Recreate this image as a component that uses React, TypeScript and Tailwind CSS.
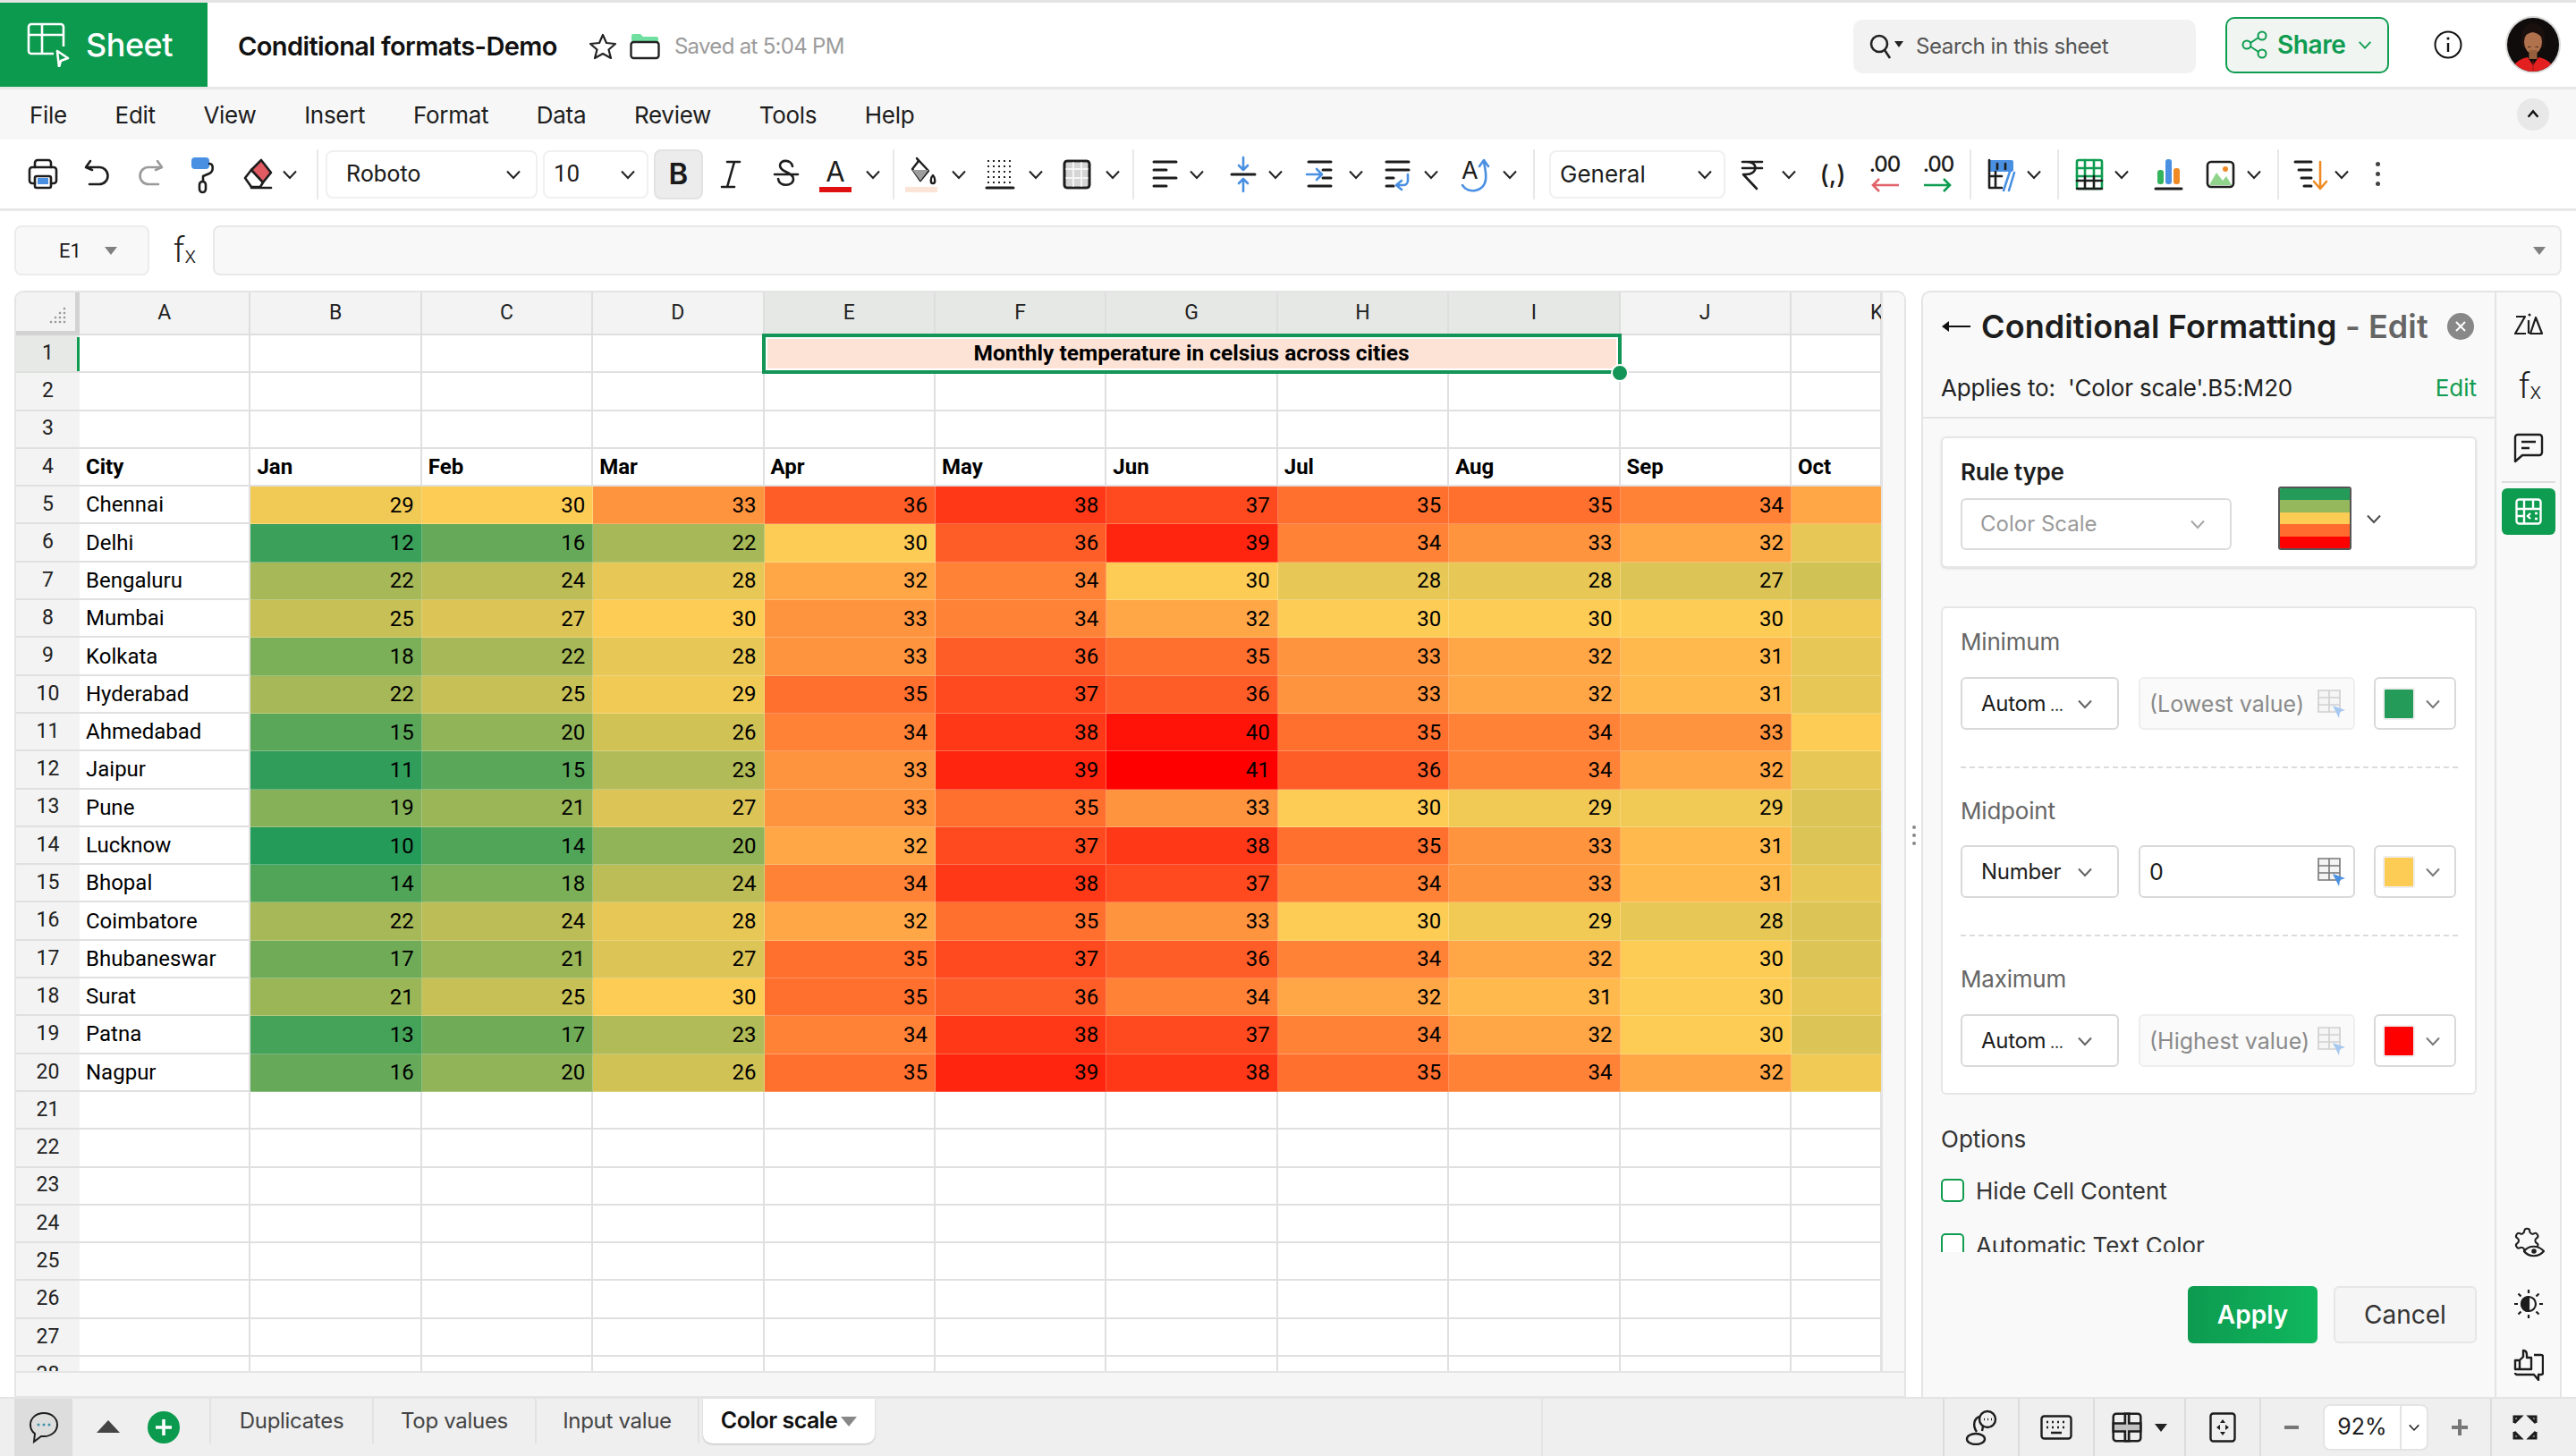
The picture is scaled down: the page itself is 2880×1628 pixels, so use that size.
import React from 'react';

const rows: [string, number[]][] = [
  ['Chennai', [29, 30, 33, 36, 38, 37, 35, 35, 34, 32]],
  ['Delhi', [12, 16, 22, 30, 36, 39, 34, 33, 32, 28]],
  ['Bengaluru', [22, 24, 28, 32, 34, 30, 28, 28, 27, 26]],
  ['Mumbai', [25, 27, 30, 33, 34, 32, 30, 30, 30, 29]],
  ['Kolkata', [18, 22, 28, 33, 36, 35, 33, 32, 31, 28]],
  ['Hyderabad', [22, 25, 29, 35, 37, 36, 33, 32, 31, 28]],
  ['Ahmedabad', [15, 20, 26, 34, 38, 40, 35, 34, 33, 30]],
  ['Jaipur', [11, 15, 23, 33, 39, 41, 36, 34, 32, 28]],
  ['Pune', [19, 21, 27, 33, 35, 33, 30, 29, 29, 27]],
  ['Lucknow', [10, 14, 20, 32, 37, 38, 35, 33, 31, 27]],
  ['Bhopal', [14, 18, 24, 34, 38, 37, 34, 33, 31, 28]],
  ['Coimbatore', [22, 24, 28, 32, 35, 33, 30, 29, 28, 27]],
  ['Bhubaneswar', [17, 21, 27, 35, 37, 36, 34, 32, 30, 27]],
  ['Surat', [21, 25, 30, 35, 36, 34, 32, 31, 30, 28]],
  ['Patna', [13, 17, 23, 34, 38, 37, 34, 32, 30, 27]],
  ['Nagpur', [16, 20, 26, 35, 39, 38, 35, 34, 32, 29]],
];

const months = ['Jan', 'Feb', 'Mar', 'Apr', 'May', 'Jun', 'Jul', 'Aug', 'Sep', 'Oct'];
const letters = ['A', 'B', 'C', 'D', 'E', 'F', 'G', 'H', 'I', 'J', 'K'];

// three point colour scale: 10 -> green, 30 -> yellow, 41 -> red
function scaleColor(v: number) {
  const mix = (a: number[], b: number[], t: number) =>
    `rgb(${a.map((c, i) => Math.round(c + (b[i] - c) * t)).join(',')})`;
  if (v <= 30) return mix([37, 155, 90], [252, 204, 85], (v - 10) / 20);
  return mix([255, 204, 85], [255, 0, 0], (v - 30) / 11);
}

const cellBase = 'border-r-2 border-b-2 border-[#e0e0e0] bg-white';

const Chev = ({ className = '' }: { className?: string }) => (
  <svg viewBox="0 0 20 20" className={`h-[20px] w-[20px] shrink-0 ${className}`} fill="none" stroke="#222" strokeWidth="2">
    <path d="M3 6.5 10 14l7-7.5" />
  </svg>
);

const Divider = ({ className = '' }: { className?: string }) => (
  <div className={`h-[56px] w-[2px] shrink-0 bg-[#e8e8e8] ${className}`} />
);

const Ico = ({ className = '', children }: { className?: string; children: React.ReactNode }) => (
  <svg viewBox="0 0 44 44" className={`h-[44px] w-[44px] shrink-0 ${className}`} fill="none" stroke="#1d1d1d" strokeWidth="2.6" strokeLinecap="round" strokeLinejoin="round">
    {children}
  </svg>
);

const Select = ({ label, className }: { label: string; className: string }) => (
  <div className={`flex h-[54px] shrink-0 items-center justify-between rounded-[8px] border-2 border-[#f0f0f0] text-[26px] text-[#1d1d1d] ${className}`}>
    <span>{label}</span>
    <Chev />
  </div>
);

const CellPick = ({ active }: { active?: boolean }) => (
  <svg viewBox="0 0 32 34" className="h-[34px] w-[32px] shrink-0" fill="none">
    <path d="M1 2h24v24H1zM1 10h24M1 18h24M13 2v24" stroke={active ? '#777' : '#cfcfcf'} strokeWidth="1.6" fill={active ? '#f3f3f3' : '#f5f5f5'} />
    <path d="M17 19l14 5-6 2-1 7z" fill={active ? '#4a90e2' : '#a6c8f0'} />
  </svg>
);

const ScaleRow = ({ type, value, muted, color }: { type: React.ReactNode; value: string; muted?: boolean; color: string }) => (
  <div className="flex h-[59px] gap-[22px]">
    <div className="flex w-[177px] shrink-0 items-center justify-between rounded-[6px] border-2 border-[#d9d9d9] bg-white pl-[21px] pr-[26px] text-[24px] tracking-[-0.3px] text-[#1d1d1d]">
      <span className="whitespace-pre">{type}</span>
      <Chev className="opacity-70" />
    </div>
    <div className={`flex w-[242px] shrink-0 items-center justify-between rounded-[6px] border-2 pl-[10px] pr-[8px] text-[25px] ${muted ? 'border-[#eeeeee] bg-[#fafafa] text-[#8a8a8a]' : 'border-[#d9d9d9] bg-white text-[#1d1d1d]'}`}>
      <span className="whitespace-nowrap pt-[3px]">{value}</span>
      <CellPick active={!muted} />
    </div>
    <div className="ml-[-1px] flex w-[92px] shrink-0 items-center gap-[10px] rounded-[6px] border-2 border-[#d9d9d9] bg-white pl-[8px]">
      <div className="h-[36px] w-[36px] rounded-[3px] border-2 border-[#eeeeee]" style={{ backgroundColor: color }} />
      <Chev className="opacity-60" />
    </div>
  </div>
);

const Tab = ({ label }: { label: string }) => (
  <div className="flex h-[50px] w-[182px] shrink-0 items-center justify-center border-r-2 border-[#e2e2e2] text-[24px] tracking-[-0.3px] text-[#444]">{label}</div>
);

const Avatar = () => (
  <svg viewBox="0 0 62 64" className="h-[64px] w-[62px]">
    <defs>
      <clipPath id="av"><ellipse cx="31" cy="32" rx="29" ry="30" /></clipPath>
    </defs>
    <ellipse cx="31" cy="32" rx="31" ry="32" fill="#d8d8d8" />
    <g clipPath="url(#av)">
      <rect width="62" height="64" fill="#0f0c0b" />
      <path d="M18 30c-2-17 7-22 13-22s15 5 13 22l-2 6H20z" fill="#1a100e" />
      <ellipse cx="31" cy="29" rx="10" ry="13" fill="#b0724c" />
      <path d="M21 24c1-7 6-10 10-10 5 0 9 3 10 10-3-4-8-6-11-6-3 1-7 2-9 6z" fill="#1a100e" />
      <rect x="26.500" y="38" width="9" height="10" fill="#96603e" />
      <path d="M25 34.500h3.500M33.500 34.500H37" stroke="#4a2a1c" strokeWidth="1" />
      <path d="M6 64c1-10 9-16 19-18l6 9 6-9c10 2 18 8 19 18z" fill="#e3201f" />
      <path d="M31 50v14" stroke="#a01414" strokeWidth="1" />
    </g>
  </svg>
);

export default function App() {
  const text = "font-['Inter','Liberation_Sans',sans-serif]";
  return (
    <div className={`flex h-[1628px] w-[2880px] flex-col overflow-hidden bg-white ${text} text-[#1d1d1d]`}>
      {/* top bar */}
      <header className="flex h-[100px] shrink-0 items-center border-y-[3px] border-t-[#e4e4e4] border-b-[#e8e8e8] pr-[17px]">
        <div className="flex h-full w-[232px] items-center bg-[#0b9a4e] pl-[30px] text-white">
          <svg viewBox="0 0 50 50" className="h-[50px] w-[50px]" fill="none" stroke="#fff" strokeWidth="2.6" strokeLinejoin="round">
            <path d="M30 35H5a3 3 0 0 1-3-3V5a3 3 0 0 1 3-3h33a3 3 0 0 1 3 3v22M2 14h39M17 2v33" />
            <path d="M34 32l12 8-8 3-2 7z" />
          </svg>
          <span className="ml-[16px] text-[36px] font-medium tracking-[-0.5px]">Sheet</span>
        </div>
        <div className="flex items-center pt-[3px]">
          <span className="ml-[34px] text-[29px] font-semibold tracking-[-0.6px] text-[#111]">Conditional formats-Demo</span>
          <svg viewBox="0 0 30 30" className="ml-[36px] h-[30px] w-[30px]" fill="none" stroke="#222" strokeWidth="2.2" strokeLinejoin="round">
            <path d="M15 2l4 9 10 1-7.500 6.500L24 28l-9-5-9 5 2.500-9.500L1 12l10-1z" />
          </svg>
          <svg viewBox="0 0 34 30" className="ml-[15px] h-[30px] w-[34px]">
            <path d="M2 10V3a2 2 0 0 1 2-2h8l3 3h15a2 2 0 0 1 2 2v6H2z" fill="#6fe0a0" />
            <rect x="1.500" y="10" width="31" height="18" rx="3" fill="#fff" stroke="#222" strokeWidth="2.4" />
          </svg>
          <span className="ml-[16px] text-[24px] tracking-[-0.7px] text-[#9b9b9b]">Saved at 5:04 PM</span>
        </div>

        <div className="ml-auto mt-[3px] flex h-[60px] w-[383px] items-center rounded-[10px] bg-[#f2f2f2] pl-[18px] text-[24px] text-[#555]">
          <svg viewBox="0 0 40 30" className="h-[30px] w-[40px]" fill="none" stroke="#222" strokeWidth="2.600">
            <circle cx="11" cy="12" r="9" />
            <path d="M17 19l6 9" />
            <path d="M28 9h10l-5 7z" fill="#222" stroke="none" />
          </svg>
          <span className="ml-[12px] tracking-[-0.4px]">Search in this sheet</span>
        </div>
        <div className="ml-[33px] flex h-[63px] w-[183px] items-center rounded-[10px] border-2 border-[#0e9c50] bg-[#f0f5f1] pl-[16px] text-[#0e9c50]">
          <svg viewBox="0 0 30 32" className="h-[32px] w-[30px]" fill="none" stroke="#0e9c50" strokeWidth="2">
            <circle cx="23" cy="6" r="4.500" />
            <circle cx="6" cy="16" r="4.500" />
            <circle cx="23" cy="26" r="4.500" />
            <path d="M10 14l9-6M10 18l9 6" />
          </svg>
          <span className="ml-[10px] text-[28px] font-semibold tracking-[-0.4px]">Share</span>
          <svg viewBox="0 0 20 20" className="ml-[12px] h-[18px] w-[18px]" fill="none" stroke="#0e9c50" strokeWidth="2">
            <path d="M3 6.500 10 14l7-7.500" />
          </svg>
        </div>
        <svg viewBox="0 0 32 32" className="ml-[50px] h-[32px] w-[32px]" fill="none" stroke="#111" strokeWidth="2">
          <circle cx="16" cy="16" r="14.500" />
          <path d="M16 14v10" strokeWidth="2.400" />
          <circle cx="16" cy="9" r="1.600" fill="#111" stroke="none" />
        </svg>
        <div className="ml-[48px]"><Avatar /></div>
      </header>

      {/* menu */}
      <nav className="flex h-[56px] shrink-0 items-center gap-[53.700px] bg-[#f7f7f7] pl-[33px] pr-[30px] text-[26px] tracking-[-0.3px]">
        {['File', 'Edit', 'View', 'Insert', 'Format', 'Data', 'Review', 'Tools', 'Help'].map((m) => (
          <span key={m}>{m}</span>
        ))}
        <div className="ml-auto flex h-[36px] w-[36px] items-center justify-center rounded-full bg-[#e8e8e8]">
          <svg viewBox="0 0 20 20" className="h-[18px] w-[18px]" fill="none" stroke="#111" strokeWidth="2.600"><path d="M4 13l6-7 6 7" /></svg>
        </div>
      </nav>

      {/* toolbar */}
      <div className="flex h-[80px] shrink-0 items-center border-b-[3px] border-[#e8e8e8] pl-[26px]">
        <Ico>
          <path d="M13 14V9a3 3 0 0 1 3-3h12a3 3 0 0 1 3 3v5" />
          <path d="M13 32H10a3 3 0 0 1-3-3V17a3 3 0 0 1 3-3h24a3 3 0 0 1 3 3v12a3 3 0 0 1-3 3h-3" />
          <rect x="13" y="24" width="18" height="13" rx="2" />
          <rect x="16" y="26" width="12" height="7" fill="#4a90e2" stroke="none" />
        </Ico>
        <Ico className="ml-[17px]">
          <path d="M14 7l-5 7 7 3" />
          <path d="M10 14h14a9 9 0 0 1 0 19H13" />
        </Ico>
        <Ico className="ml-[15px]">
          <g stroke="#9a9a9a">
            <path d="M30 7l5 7-7 3" />
            <path d="M34 14H20a9 9 0 0 0 0 19h11" />
          </g>
        </Ico>
        <Ico className="ml-[15px]">
          <rect x="9" y="3" width="20" height="13" rx="4" fill="#4a90e2" stroke="none" />
          <path d="M29 10c5 0 5 9 0 11l-7 3v6" />
          <rect x="18" y="30" width="7" height="12" rx="3.500" />
        </Ico>
        <Ico className="ml-[18px]">
          <path d="M25 6l11 14-9 11-13-14z" fill="#e25a62" />
          <path d="M14 17l-7 9 7 10h10l3-5" />
          <path d="M14 37h22" />
        </Ico>
        <Chev className="ml-[3px]" />
        <Divider className="ml-[20px]" />
        <Select label="Roboto" className="ml-[8px] w-[237px] pl-[21px] pr-[15px] font-['Roboto',sans-serif]" />
        <Select label="10" className="ml-[6px] w-[118px] pl-[10px] pr-[11px] font-['Roboto',sans-serif]" />
        <div className="ml-[6px] flex h-[56px] w-[55px] items-center justify-center rounded-[8px] border-2 border-[#e2e2e2] bg-[#ececec] text-[33px] font-semibold text-[#1a1a1a]">B</div>
        <Ico className="ml-[9px]"><path d="M18 8h14M12 36h14M26 8l-8 28" /></Ico>
        <Ico className="ml-[18px]">
          <path d="M29 13c-1-8-14-8-14-1 0 8 15 7 15 15 0 9-16 9-17 0M9 22h26" />
        </Ico>
        <div className="ml-[11px] flex h-[44px] w-[44px] shrink-0 flex-col items-center pt-[2px]">
          <span className="text-[31px] leading-[33px] text-[#1d1d1d]">A</span>
          <div className="mt-[1px] h-[6px] w-[36px] bg-[#e01010]" />
        </div>
        <Chev className="ml-[10px]" />
        <Divider className="ml-[12px]" />
        <div className="ml-[8px] flex h-[44px] w-[44px] shrink-0 flex-col items-center">
          <svg viewBox="0 0 36 36" className="h-[36px] w-[36px]" fill="none" stroke="#1d1d1d" strokeWidth="2.400" strokeLinejoin="round">
            <path d="M13 4l13 14-9 11-9-13 7-9z" />
            <path d="M8 17h18l-9 12z" fill="#9d9d9d" stroke="none" />
            <path d="M31 23c3 3 3 9 0 9s-3-6 0-9z" />
          </svg>
          <div className="h-[6px] w-[36px] bg-[#fce4d6]" />
        </div>
        <Chev className="ml-[10px]" />
        <Ico className="ml-[14px]">
          <path d="M8 7h28M8 13h28M8 19h28M8 25h28M8 31h28" stroke="#222" strokeWidth="2" strokeLinecap="butt" strokeDasharray="2 4" />
          <path d="M7 37h30" strokeWidth="3" />
        </Ico>
        <Chev className="ml-[8px]" />
        <Ico className="ml-[14px]">
          <rect x="8" y="7" width="28" height="30" rx="3" fill="#d5d5d5" />
          <path d="M8 16h28M8 26h28M18 7v30M27 7v30" stroke="#f5f5f5" strokeWidth="2" />
          <rect x="8" y="7" width="28" height="30" rx="3" />
        </Ico>
        <Chev className="ml-[8px]" />
        <Divider className="ml-[12px]" />
        <Ico className="ml-[13px]">
          <path d="M9 8h25M9 17h14M9 26h25M9 35h14" strokeWidth="3" />
        </Ico>
        <Chev className="ml-[3px]" />
        <Ico className="ml-[20px]">
          <path d="M9 22h26" strokeWidth="3" />
          <path d="M22 3v14M17 12l5 5 5-5M22 41V27M17 32l5-5 5 5" stroke="#4a90e2" />
        </Ico>
        <Chev className="ml-[4px]" />
        <Ico className="ml-[18px]">
          <path d="M9 8h25M25 17h9M25 26h9M9 35h25" strokeWidth="3" />
          <path d="M7 22h16M18 16l6 6-6 6" stroke="#4a90e2" />
        </Ico>
        <Chev className="ml-[8px]" />
        <Ico className="ml-[15px]">
          <path d="M9 8h25M9 17h25M9 26h8M9 35h8" strokeWidth="3" />
          <path d="M33 22v7a5 5 0 0 1-5 5h-7M26 29l-6 5 6 5" stroke="#4a90e2" />
        </Ico>
        <Chev className="ml-[5px]" />
        <div className="relative ml-[21px] h-[44px] w-[44px] shrink-0">
          <span className="absolute left-[3px] top-[0px] text-[27px] leading-[36px] text-[#1d1d1d]">A</span>
          <svg viewBox="0 0 44 44" className="absolute inset-0 h-[44px] w-[44px]" fill="none" stroke="#4a90e2" strokeWidth="2.600" strokeLinecap="round" strokeLinejoin="round">
            <path d="M4 34c6 10 24 8 26-6 1-7-1-14-2-20M23 13l5-7 5 7" />
          </svg>
        </div>
        <Chev className="ml-[3px]" />
        <Divider className="ml-[16px]" />
        <Select label="General" className="ml-[16px] w-[197px] pl-[10px] pr-[11px]" />
        <Ico className="ml-[9px]">
          <path d="M10 8h22M10 15h22M14 8c14-1 14 14 0 14h-3l15 16" />
        </Ico>
        <Chev className="ml-[8px]" />
        <span className="ml-[17px] w-[44px] shrink-0 text-center text-[28px] font-medium">(,)</span>
        <div className="ml-[14px] flex h-[50px] w-[44px] shrink-0 flex-col items-center">
          <span className="text-[24px] font-medium leading-[28px] tracking-[-1px]">.00</span>
          <svg viewBox="0 0 32 18" className="h-[18px] w-[32px]" fill="none" stroke="#e0636a" strokeWidth="2.600"><path d="M32 9H3M10 2 3 9l7 7" /></svg>
        </div>
        <div className="ml-[16px] flex h-[50px] w-[44px] shrink-0 flex-col items-center">
          <span className="text-[24px] font-medium leading-[28px] tracking-[-1px]">.00</span>
          <svg viewBox="0 0 32 18" className="h-[18px] w-[32px]" fill="none" stroke="#0e9c50" strokeWidth="2.600"><path d="M0 9h29M22 2l7 7-7 7" /></svg>
        </div>
        <Divider className="ml-[13px]" />
        <Ico className="ml-[12px]">
          <rect x="7" y="6" width="28" height="13" rx="2" fill="#4a90e2" stroke="none" />
          <path d="M8 6v31h14M8 24h14M15 19v18M17 10v6M26 10v6" />
          <path d="M32 16l-8 24M36 20l-6 20" stroke="#4a90e2" />
        </Ico>
        <Chev className="ml-[4px]" />
        <Divider className="ml-[16px]" />
        <Ico className="ml-[12px]">
          <rect x="8" y="6" width="28" height="32" rx="2" stroke="#0e9c50" />
          <path d="M8 15h28M8 24h28M17 6v18M27 6v18" stroke="#0e9c50" />
          <path d="M8 29h28M17 24v14M27 24v14M8 38h28" />
        </Ico>
        <Chev className="ml-[4px]" />
        <Ico className="ml-[20px]">
          <rect x="19" y="5" width="7" height="28" rx="3" fill="#4a90e2" stroke="none" />
          <rect x="10" y="17" width="7" height="16" rx="3" fill="#34b45c" stroke="none" />
          <rect x="28" y="15" width="7" height="18" rx="3" fill="#f08a24" stroke="none" />
          <path d="M8 38h29" strokeWidth="3" />
        </Ico>
        <Ico className="ml-[15px]">
          <rect x="7" y="8" width="29" height="28" rx="4" />
          <path d="M9 34l8-14 7 9 4-5 6 10z" fill="#8fd48a" stroke="none" />
          <circle cx="27" cy="16" r="3" fill="#f08a24" stroke="none" />
        </Ico>
        <Chev className="ml-[5px]" />
        <Divider className="ml-[16px]" />
        <Ico className="ml-[13px]">
          <path d="M5 8h18M9 17h14M12 26h11M15 35h8" strokeWidth="3" />
          <path d="M33 8v30M26 30l7 8 7-8" stroke="#f08a24" />
        </Ico>
        <Chev className="ml-[3px]" />
        <div className="ml-[8px] flex h-[44px] w-[44px] shrink-0 flex-col items-center justify-center gap-[6px]">
          <div className="h-[5px] w-[5px] rounded-full bg-[#444]" />
          <div className="h-[5px] w-[5px] rounded-full bg-[#444]" />
          <div className="h-[5px] w-[5px] rounded-full bg-[#444]" />
        </div>
      </div>

      {/* formula bar */}
      <div className="mt-[16px] flex h-[56px] shrink-0 items-stretch pl-[16px] pr-[16px]">
        <div className="flex w-[151px] items-center rounded-[8px] border-2 border-[#ececec] bg-[#f8f8f8] pl-[48px] font-['Roboto',sans-serif] text-[22px]">
          <span>E1</span>
          <div className="ml-[26px] h-0 w-0 border-x-[7px] border-t-[9px] border-x-transparent border-t-[#808080]" />
        </div>
        <div className="flex w-[71px] items-center justify-center pl-[8px] font-['Roboto',sans-serif] text-[38px] font-light leading-none text-[#222]">
          f<span className="mt-[10px] text-[26px]">x</span>
        </div>
        <div className="flex flex-1 items-center justify-end rounded-[8px] border-2 border-[#e8e8e8] bg-[#f8f8f8] pr-[16px]">
          <div className="h-0 w-0 border-x-[7px] border-t-[9px] border-x-transparent border-t-[#808080]" />
        </div>
      </div>

      {/* main */}
      <div className="mt-[17px] flex min-h-0 flex-1 pl-[16px] pr-[16px]">
        {/* sheet */}
        <div className="flex w-[2115px] shrink-0 flex-col overflow-hidden rounded-t-[10px] border-2 border-b-0 border-[#e4e4e4] bg-[#f7f7f7]">
          <div className="flex h-[1206px] shrink-0">
            <div className="h-full w-[2085px] shrink-0 overflow-hidden font-['Roboto',sans-serif] text-[24px] text-black">
              <div className="grid grid-cols-[71px_repeat(10,191.4px)_101px] grid-rows-[48px] auto-rows-[42.3px]">
                <div className="relative border-r-[5px] border-b-[5px] border-[#d2d2d2] bg-[#f3f3f3]">
                  <svg viewBox="0 0 24 24" className="absolute bottom-[6px] right-[8px] h-[24px] w-[24px]" fill="#999">
                    {[[20, 2], [15, 7], [20, 7], [10, 12], [15, 12], [20, 12], [5, 17], [10, 17], [15, 17], [20, 17]].map(([x, y]) => (
                      <circle key={`${x}-${y}`} cx={x} cy={y + 3} r="1.300" />
                    ))}
                  </svg>
                </div>
                {letters.map((l, i) => (
                  <div key={l} className={`flex items-center border-r-2 border-b-2 border-[#dedede] text-[23px] text-[#222] ${i >= 4 && i <= 8 ? 'bg-[#e6e8e6]' : 'bg-[#f3f3f3]'} ${i === 10 ? 'justify-start pl-[88px]' : 'justify-center'}`}>
                    {l}
                  </div>
                ))}

                {/* row 1 */}
                <div className="relative flex items-center justify-center border-b-2 border-[#e0e0e0] bg-[#e7e9e7] text-[23px] text-[#222]">
                  1
                  <div className="absolute bottom-[0px] right-[0px] top-[2px] w-[3px] bg-[#0e9c50]" />
                </div>
                {[0, 1, 2, 3].map((i) => <div key={i} className={cellBase} />)}
                <div className="relative col-span-5 flex items-center justify-center bg-[#fde3d6] font-bold text-[#000]">
                  <div className="absolute -bottom-[1px] -left-[3px] -right-[1px] -top-[2px] border-[4px] border-[#149558]">
                    <div className="h-full w-full border-2 border-white" />
                  </div>
                  <span className="relative -top-[1px] -left-[1px] text-[24.500px]">Monthly temperature in celsius across cities</span>
                  <div className="absolute -bottom-[10px] -right-[9px] z-10 h-[20px] w-[20px] rounded-full border-2 border-white bg-[#149558]" />
                </div>
                {[0, 1].map((i) => <div key={i} className={cellBase} />)}

                {/* rows 2, 3 */}
                {[2, 3].map((r) => (
                  <React.Fragment key={r}>
                    <div className="flex items-center justify-center border-b-2 border-[#e0e0e0] bg-[#f3f3f3] text-[23px] text-[#222]">{r}</div>
                    {letters.map((l) => <div key={l} className={cellBase} />)}
                  </React.Fragment>
                ))}

                {/* header row */}
                <div className="flex items-center justify-center border-b-2 border-[#e0e0e0] bg-[#f3f3f3] text-[23px] text-[#222]">4</div>
                <div className={`${cellBase} flex items-center pl-[7px] font-bold`}>City</div>
                {months.map((m) => (
                  <div key={m} className={`${cellBase} flex items-center pl-[7px] font-bold`}>{m}</div>
                ))}

                {rows.map(([city, vals], r) => (
                  <React.Fragment key={city}>
                    <div className="flex items-center justify-center border-b-2 border-[#e0e0e0] bg-[#f3f3f3] text-[23px] text-[#222]">{r + 5}</div>
                    <div className={`${cellBase} flex items-center pl-[7px]`}>{city}</div>
                    {vals.map((v, i) => (
                      <div key={i} className="flex items-center justify-end border-r border-b border-white/25 pr-[8px]" style={{ backgroundColor: scaleColor(v) }}>
                        {i < 9 ? v : ''}
                      </div>
                    ))}
                  </React.Fragment>
                ))}

                {/* empty rows */}
                {[21, 22, 23, 24, 25, 26, 27, 28].map((r) => (
                  <React.Fragment key={r}>
                    <div className="flex items-center justify-center border-b-2 border-[#e0e0e0] bg-[#f3f3f3] text-[23px] text-[#222]">{r}</div>
                    {letters.map((l) => <div key={l} className={cellBase} />)}
                  </React.Fragment>
                ))}
              </div>
            </div>
            <div className="flex-1 border-l-2 border-[#e4e4e4] bg-[#f8f8f8]" />
          </div>
          <div className="h-[30px] shrink-0 border-t-2 border-b-2 border-[#e4e4e4] bg-[#f6f6f6]" />
        </div>

        {/* resize handle */}
        <div className="flex w-[17px] shrink-0 flex-col items-center justify-center gap-[5px] pb-[20px]">
          <div className="h-[4px] w-[4px] rounded-full bg-[#888]" />
          <div className="h-[4px] w-[4px] rounded-full bg-[#888]" />
          <div className="h-[4px] w-[4px] rounded-full bg-[#888]" />
        </div>

        {/* conditional formatting panel */}
        <aside className="flex min-w-0 flex-1 rounded-t-[10px] border-2 border-b-0 border-[#e4e4e4] bg-[#f9f9f9]">
          <div className="flex w-[639px] shrink-0 flex-col">
            <div className="h-[141px] shrink-0 border-b-2 border-[#e4e4e4] pl-[20px] pr-[20px]">
              <div className="flex h-[76px] items-center">
                <svg viewBox="0 0 34 20" className="h-[20px] w-[34px]" fill="none" stroke="#111" strokeWidth="2">
                  <path d="M33 10H5" />
                  <path d="M9 4v12L1 10z" fill="#111" stroke="none" />
                </svg>
                <span className="ml-[11px] whitespace-nowrap text-[36px] font-semibold tracking-[0.1px]">Conditional Formatting <span className="text-[#666]">- Edit</span></span>
                <div className="ml-auto mr-[3px] flex h-[30px] w-[30px] items-center justify-center rounded-full bg-[#888]">
                  <svg viewBox="0 0 16 16" className="h-[16px] w-[16px]" fill="none" stroke="#fff" strokeWidth="2"><path d="M3 3l10 10M13 3 3 13" /></svg>
                </div>
              </div>
              <div className="mt-[16px] flex h-[28px] items-center justify-between text-[26px]">
                <span className="whitespace-pre tracking-[-0.2px] text-[#222]">Applies to:  'Color scale'.B5:M20</span>
                <span className="text-[#119c50]">Edit</span>
              </div>
            </div>

            <div className="h-[932px] shrink-0 overflow-hidden pl-[20px] pr-[20px]">
              <div className="mt-[20px] flex h-[147px] rounded-[6px] border-2 border-[#e6e6e6] bg-white pl-[20px] shadow-sm">
                <div>
                  <div className="mt-[23px] text-[26px] font-semibold leading-[30px] tracking-[-0.3px]">Rule type</div>
                  <div className="mt-[14px] flex h-[58px] w-[303px] items-center justify-between rounded-[6px] border-2 border-[#dcdcdc] pl-[20px] pr-[26px] text-[24px] text-[#9a9a9a]">
                    <span>Color Scale</span>
                    <Chev className="opacity-40" />
                  </div>
                </div>
                <div className="ml-[52px] mt-[54px] flex h-[71px] w-[82px] flex-col overflow-hidden rounded-[3px] border-2 border-[#555]">
                  <div className="flex-1 bg-[#259b5a]" />
                  <div className="flex-1 bg-[#94b85b]" />
                  <div className="flex-1 bg-[#fccc55]" />
                  <div className="flex-1 bg-[#ff6b2e]" />
                  <div className="flex-1 bg-[#ff0000]" />
                </div>
                <Chev className="ml-[15px] mt-[80px] opacity-80" />
              </div>

              <div className="mt-[43px] h-[546px] rounded-[6px] border-2 border-[#e6e6e6] bg-white pl-[20px] pr-[19px] pt-[17px] text-[#666]">
                <div className="flex h-[40px] items-center text-[26px] tracking-[-0.2px]">Minimum</div>
                <div className="mt-[20px]"><ScaleRow type={<>Autom<span className="text-[18px]"> ...</span></>} value="(Lowest value)" muted color="#259b5a" /></div>
                <div className="mt-[41px] border-t-2 border-dashed border-[#dcdcdc]" />
                <div className="mt-[27px] flex h-[40px] items-center text-[26px] tracking-[-0.2px]">Midpoint</div>
                <div className="mt-[19px]"><ScaleRow type="Number" value="0" color="#fccc55" /></div>
                <div className="mt-[41px] border-t-2 border-dashed border-[#dcdcdc]" />
                <div className="mt-[27px] flex h-[40px] items-center text-[26px] tracking-[-0.2px]">Maximum</div>
                <div className="mt-[20px]"><ScaleRow type={<>Autom<span className="text-[18px]"> ...</span></>} value="(Highest value)" muted color="#ff0000" /></div>
              </div>

              <div className="mt-[33px] flex h-[32px] items-center text-[26px] text-[#333]">Options</div>
              <div className="mt-[26px] flex h-[32px] items-center text-[26px] text-[#333]">
                <div className="h-[26px] w-[26px] rounded-[5px] border-2 border-[#119c50] bg-white" />
                <span className="ml-[13px] tracking-[-0.1px]">Hide Cell Content</span>
              </div>
              <div className="mt-[29px] flex h-[32px] items-center text-[26px] text-[#333]">
                <div className="h-[26px] w-[26px] rounded-[5px] border-2 border-[#119c50] bg-white" />
                <span className="ml-[13px] tracking-[-0.1px]">Automatic Text Color</span>
              </div>
            </div>

            <div className="flex flex-1 justify-end gap-[18px] pr-[20px] pt-[38px]">
              <div className="flex h-[64px] w-[145px] items-center justify-center rounded-[6px] bg-linear-to-r from-[#0d9a50] to-[#10b85e] text-[28px] font-semibold text-white">Apply</div>
              <div className="flex h-[64px] w-[160px] items-center justify-center rounded-[6px] border-2 border-[#e6e6e6] bg-[#f5f5f5] text-[28px] text-[#333]">Cancel</div>
            </div>
          </div>

          {/* right rail */}
          <div className="flex flex-1 flex-col items-center border-l-2 border-[#e4e4e4] pt-[18px]">
            <svg viewBox="0 0 34 34" className="h-[34px] w-[34px]" fill="none" stroke="#1d1d1d" strokeWidth="2.200" strokeLinejoin="round">
              <path d="M3 9h10L2 28h12M17 13v15M25 10l7 18H19z" />
              <circle cx="18" cy="7" r="1.500" fill="#1d1d1d" stroke="none" />
            </svg>
            <div className="mt-[35px] flex h-[36px] items-center pl-[4px] font-['Roboto',sans-serif] text-[38px] font-light leading-none">f<span className="mt-[10px] text-[26px]">x</span></div>
            <svg viewBox="0 0 34 34" className="mt-[34px] h-[34px] w-[34px]" fill="none" stroke="#1d1d1d" strokeWidth="2.400" strokeLinejoin="round">
              <path d="M2 5a3 3 0 0 1 3-3h24a3 3 0 0 1 3 3v17a3 3 0 0 1-3 3H10l-8 7z" />
              <path d="M9 10h16M9 17h9" />
            </svg>
            <div className="mt-[20px] h-[2px] w-[60px] bg-[#ddd]" />
            <div className="mt-[6px] flex h-[52px] w-[60px] items-center justify-center rounded-[6px] bg-[#0e9c50]">
              <svg viewBox="0 0 30 30" className="h-[30px] w-[30px]" fill="none" stroke="#fff" strokeWidth="2.400">
                <rect x="1.500" y="1.500" width="27" height="27" rx="3" />
                <path d="M1.500 12h27M10 1.500V28.500M20 1.500v10M1.500 20h8" />
                <path d="M17 17l-3 3 3 3M22 17h3M22 23h3" />
              </svg>
            </div>
            <svg viewBox="0 0 36 38" className="mt-auto h-[38px] w-[36px]" fill="none" stroke="#1d1d1d" strokeWidth="1.500" strokeLinejoin="round">
              <g transform="scale(1.350)">
                <path d="M12.220 2h-.44a2 2 0 0 0-2 2v.18a2 2 0 0 1-1 1.730l-.43.25a2 2 0 0 1-2 0l-.15-.08a2 2 0 0 0-2.730.73l-.22.38a2 2 0 0 0 .73 2.730l.15.1a2 2 0 0 1 1 1.720v.51a2 2 0 0 1-1 1.740l-.15.09a2 2 0 0 0-.73 2.730l.22.38a2 2 0 0 0 2.730.73l.15-.08a2 2 0 0 1 2 0l.43.25a2 2 0 0 1 1 1.730V20a2 2 0 0 0 2 2h.44a2 2 0 0 0 2-2v-.18a2 2 0 0 1 1-1.730l.43-.25a2 2 0 0 1 2 0l.15.08a2 2 0 0 0 2.730-.73l.22-.39a2 2 0 0 0-.73-2.730l-.15-.08a2 2 0 0 1-1-1.740v-.5a2 2 0 0 1 1-1.740l.15-.09a2 2 0 0 0 .73-2.730l-.22-.38a2 2 0 0 0-2.730-.73l-.15.08a2 2 0 0 1-2 0l-.43-.25a2 2 0 0 1-1-1.730V4a2 2 0 0 0-2-2z" />
              </g>
              <path d="M13 28c5-7 16-7 22 0-6 7-17 7-22 0z" fill="#f9f9f9" strokeWidth="2.200" />
              <circle cx="24" cy="28" r="2.800" fill="#1d1d1d" stroke="none" />
            </svg>
            <svg viewBox="0 0 34 34" className="mt-[32px] h-[34px] w-[34px]" fill="none" stroke="#1d1d1d" strokeWidth="2.200">
              <circle cx="17" cy="17" r="8" />
              <path d="M17 9a8 8 0 0 0 0 16z" fill="#1d1d1d" />
              <path d="M17 1v4M17 29v4M1 17h4M29 17h4M5.500 5.500l3 3M25.500 25.500l3 3M5.500 28.500l3-3M25.500 8.500l3-3" />
            </svg>
            <svg viewBox="0 0 34 36" className="mb-[18px] mt-[33px] h-[36px] w-[34px]" fill="none" stroke="#1d1d1d" strokeWidth="2.400" strokeLinejoin="round">
              <path d="M2 13h5v10H2zM7 13l4-4V2c3 0 4 2 4 5v3h5v13H7" />
              <path d="M23 7h8a2 2 0 0 1 2 2v18a2 2 0 0 1-2 2h-3v6l-5-6H4a2 2 0 0 1-2-2" />
            </svg>
          </div>
        </aside>
      </div>

      {/* sheet tabs / status bar */}
      <footer className="flex h-[66px] shrink-0 border-t-2 border-[#e4e4e4] bg-[#efefef] pl-[16px]">
        <div className="flex h-full w-[65px] shrink-0 items-center justify-center bg-[#dddddd]">
          <svg viewBox="0 0 34 36" className="h-[36px] w-[34px]" fill="none" stroke="#1d1d1d" strokeWidth="2">
            <path d="M17 2c9 0 15 6 15 13s-6 13-15 13h-3l-8 6 1-9c-3-2-5-6-5-10C2 8 8 2 17 2z" />
            <circle cx="11" cy="15" r="1.500" fill="#3a8fa8" stroke="none" />
            <circle cx="17" cy="15" r="1.500" fill="#3a8fa8" stroke="none" />
            <circle cx="23" cy="15" r="1.500" fill="#3a8fa8" stroke="none" />
          </svg>
        </div>
        <div className="ml-[27px] mt-[24px] h-0 w-0 border-x-[13px] border-b-[14px] border-x-transparent border-b-[#444]" />
        <div className="ml-[31px] mt-[14px] flex h-[36px] w-[36px] shrink-0 items-center justify-center rounded-full bg-[#0b9a4e]">
          <svg viewBox="0 0 20 20" className="h-[20px] w-[20px]" fill="none" stroke="#fff" strokeWidth="3.600"><path d="M10 1v18M1 10h18" /></svg>
        </div>
        <div className="ml-[33px] flex h-[50px] border-l-2 border-[#e2e2e2]">
          <Tab label="Duplicates" />
          <Tab label="Top values" />
          <Tab label="Input value" />
        </div>
        <div className="ml-[4px] flex h-[50px] w-[192px] shrink-0 items-center justify-center gap-[4px] rounded-b-[10px] bg-white text-[25px] font-semibold tracking-[-0.5px] text-[#111] shadow-[0_1px_2px_#bbb]">
          Color scale
          <div className="h-0 w-0 border-x-[9px] border-t-[11px] border-x-transparent border-t-[#888]" />
        </div>

        <div className="ml-[745px] h-full w-[2px] bg-[#e4e4e4]" />
        <div className="ml-[447px] flex h-full w-[84px] items-center justify-center border-l-2 border-[#dcdcdc]">
          <svg viewBox="0 0 36 40" className="h-[40px] w-[36px]" fill="none" stroke="#1d1d1d" strokeWidth="2.400">
            <circle cx="25" cy="11" r="9" />
            <path d="M20 19l-1 5M16 8c-6 2-8 10-3 17" />
            <ellipse cx="12" cy="33" rx="10" ry="6" />
            <path d="M21 11h1M25 11h1M29 11h1" />
          </svg>
        </div>
        <div className="flex h-full w-[84px] items-center justify-center border-l-2 border-[#dcdcdc]">
          <svg viewBox="0 0 36 28" className="h-[28px] w-[36px]" fill="none" stroke="#1d1d1d" strokeWidth="2.400">
            <rect x="1.500" y="1.500" width="33" height="25" rx="3" />
            <path d="M7 8h2M13 8h2M19 8h2M25 8h2M7 14h2M13 14h2M19 14h2M25 14h2M12 20h12" />
          </svg>
        </div>
        <div className="flex h-full w-[102px] items-center justify-center gap-[14px] border-l-2 border-[#dcdcdc]">
          <svg viewBox="0 0 30 30" className="h-[34px] w-[34px]" fill="none" stroke="#1d1d1d" strokeWidth="2.200">
            <rect x="1.500" y="1.500" width="27" height="27" rx="3" />
            <path d="M1.500 11H13V1.500h4V11h11.500v8H17v9.500h-4V19H1.500z" fill="#c0c0c0" />
          </svg>
          <div className="h-0 w-0 border-x-[7px] border-t-[9px] border-x-transparent border-t-[#222]" />
        </div>
        <div className="flex h-full w-[84px] items-center justify-center border-l-2 border-[#dcdcdc]">
          <svg viewBox="0 0 30 34" className="h-[34px] w-[30px]" fill="none" stroke="#1d1d1d" strokeWidth="2.400">
            <rect x="1.500" y="1.500" width="27" height="31" rx="3" />
            <path d="M15 8l3 4h-6zM15 26l3-4h-6zM8 17l4-3v6zM22 17l-4-3v6z" fill="#1d1d1d" stroke="none" />
          </svg>
        </div>
        <div className="flex h-full w-[258px] items-center border-l-2 border-[#dcdcdc]">
          <div className="ml-[26px] h-[4px] w-[16px] bg-[#777]" />
          <div className="ml-[27px] flex h-[52px] w-[118px] items-center rounded-[8px] border-2 border-[#e4e4e4] bg-white">
            <span className="w-[84px] text-center text-[25px]">92%</span>
            <div className="flex h-full flex-1 items-center justify-center border-l-2 border-[#e4e4e4]">
              <Chev className="scale-75" />
            </div>
          </div>
          <div className="relative ml-[26px] h-[18px] w-[18px]">
            <div className="absolute left-[7px] h-[18px] w-[4px] bg-[#777]" />
            <div className="absolute top-[7px] h-[4px] w-[18px] bg-[#777]" />
          </div>
        </div>
        <div className="flex h-full flex-1 items-center border-l-2 border-[#dcdcdc] pl-[23px]">
          <svg viewBox="0 0 28 28" className="h-[28px] w-[28px]" fill="none" stroke="#1d1d1d" strokeWidth="3">
            <path d="M2 9V2h7L2 9M26 9V2h-7l7 7M2 19v7h7l-7-7M26 19v7h-7l7-7" />
          </svg>
        </div>
      </footer>
    </div>
  );
}
